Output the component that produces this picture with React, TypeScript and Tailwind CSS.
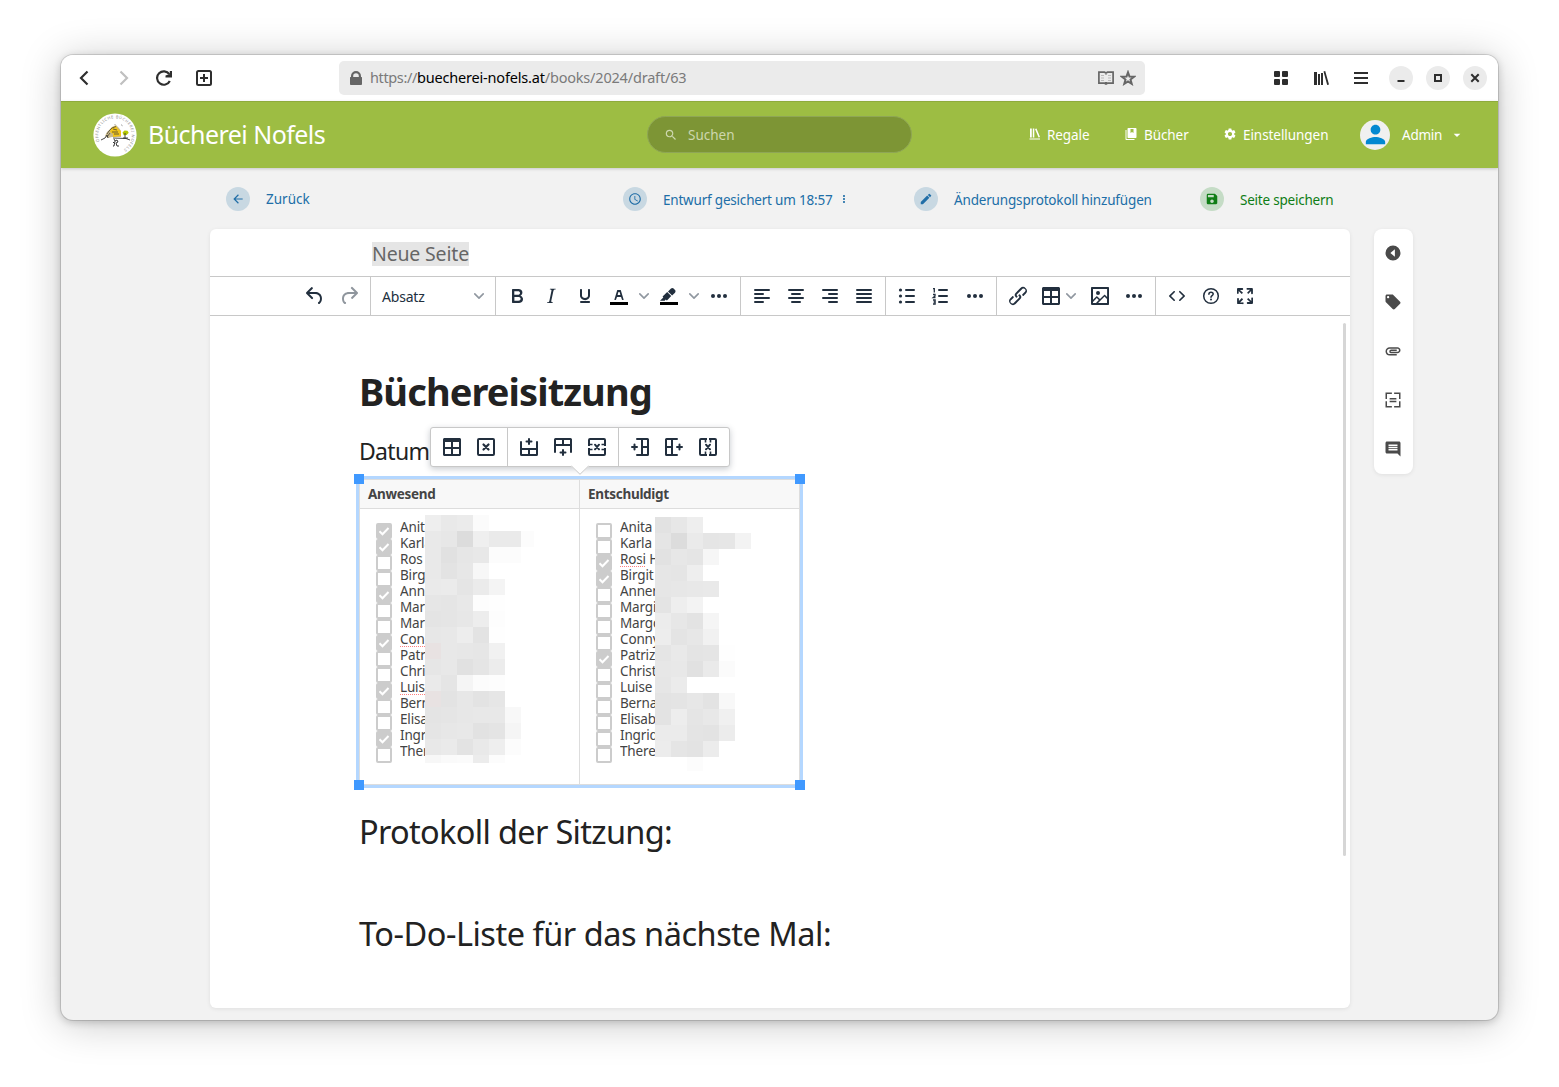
import React from "react";
import {
  MdArrowBack, MdAccessTime, MdEdit, MdSave, MdSearch, MdSettings, MdPerson,
  MdArrowDropDown, MdMoreVert, MdLocalOffer, MdAttachment, MdComment,
} from "react-icons/md";

function T({ c = "", children }: { c?: string; children: React.ReactNode }) {
  return <span className={"whitespace-pre " + c}>{children}</span>;
}

function Tm({ children, c = "h-6 w-6" }: { children: React.ReactNode; c?: string }) {
  return <svg viewBox="0 0 24 24" className={"shrink-0 fill-[#222f3e] " + c}>{children}</svg>;
}
function Btn({ children, c = "w-[34px]" }: { children: React.ReactNode; c?: string }) {
  return <div className={"flex shrink-0 items-center justify-center " + c}>{children}</div>;
}
function Chev() {
  return (
    <Btn c="w-4">
      <svg viewBox="0 0 10 10" className="h-[10px] w-[10px] fill-none stroke-[#9097a0]" strokeWidth="1.6" strokeLinecap="round" strokeLinejoin="round"><path d="M.8 2.9 5 7.1 9.2 2.9" /></svg>
    </Btn>
  );
}
const P = {
  undo: "M6.4 8H12c3.7 0 6.2 2 6.8 5.1.6 2.7-.4 5.6-2.3 6.8a1 1 0 0 1-1-1.8c1.1-.6 1.8-2.7 1.4-4.6-.5-2.1-2.1-3.5-4.9-3.5H6.4l3.3 3.3a1 1 0 1 1-1.4 1.4l-5-5a1 1 0 0 1 0-1.4l5-5a1 1 0 0 1 1.4 1.4L6.4 8Z",
  redo: "M17.6 10H12c-2.8 0-4.4 1.4-4.9 3.5-.4 2 .3 4 1.4 4.6a1 1 0 1 1-1 1.8c-2-1.2-2.9-4.1-2.3-6.8.6-3 3-5.1 6.8-5.1h5.6l-3.3-3.3a1 1 0 1 1 1.4-1.4l5 5a1 1 0 0 1 0 1.4l-5 5a1 1 0 0 1-1.4-1.4l3.3-3.3Z",
  bold: "M7.8 19c-.3 0-.5 0-.6-.2l-.2-.5V5.7c0-.2 0-.4.2-.5l.6-.2h5c1.5 0 2.7.3 3.5 1 .7.6 1.1 1.4 1.1 2.5a3 3 0 0 1-.6 1.9c-.4.6-1 1-1.6 1.2.4.1.9.3 1.3.6s.8.7 1 1.2c.4.4.5 1 .5 1.6 0 1.3-.4 2.3-1.3 3-.8.7-2.1 1-3.8 1H7.8Zm5-8.3c.6 0 1.2-.1 1.6-.5.4-.3.6-.7.6-1.3 0-1.1-.8-1.7-2.3-1.7H9.3v3.5h3.4Zm.5 6c.7 0 1.3-.1 1.7-.4.4-.4.6-.9.6-1.5s-.2-1-.7-1.4c-.4-.3-1-.4-2-.4H9.4v3.8h4Z",
  italic: "m16.7 4.7-.1.9h-.3c-.6 0-1 0-1.4.3-.3.3-.4.6-.5 1.1l-2.1 9.8v.6c0 .5.4.8 1.4.8h.2l-.2.8H8l.2-.8h.2c1.1 0 1.8-.5 2-1.5l2-9.8.1-.5c0-.6-.4-.8-1.4-.8h-.3l.2-.9h5.8Z",
  underline: "M16 5c.6 0 1 .4 1 1v5.5a4 4 0 0 1-.4 1.8l-1 1.4a5.3 5.3 0 0 1-5.5 1 5 5 0 0 1-1.6-1c-.5-.4-.8-.9-1.1-1.4a4 4 0 0 1-.4-1.8V6c0-.6.4-1 1-1s1 .4 1 1v5.5c0 .3 0 .6.2 1l.6.7a3.3 3.3 0 0 0 2.2.8 3.4 3.4 0 0 0 2.2-.8c.3-.2.4-.5.6-.8l.2-.9V6c0-.6.4-1 1-1ZM8 17h8c.6 0 1 .4 1 1s-.4 1-1 1H8a1 1 0 0 1 0-2Z",
  color: "M8.7 16h-.8a.5.5 0 0 1-.5-.6l2.7-9c.1-.3.3-.4.5-.4h2.8c.2 0 .4.1.5.4l2.7 9a.5.5 0 0 1-.5.6h-.8a.5.5 0 0 1-.4-.4l-.7-2.2c0-.3-.3-.4-.5-.4h-3.4c-.2 0-.4.1-.5.4l-.7 2.2c0 .3-.2.4-.4.4Zm2.6-7.6-.6 2a.5.5 0 0 0 .5.6h1.6a.5.5 0 0 0 .5-.6l-.6-2c0-.3-.3-.4-.5-.4h-.4c-.2 0-.4.1-.5.4Z",
  mark: "M7.7 16.7H3l3.3-3.3-.7-.8L10.2 8l4 4.1-4 4.2c-.2.2-.6.2-.8 0l-.6-.7-1.1 1.1zm5-7.5L11 7.4l3-2.9a2 2 0 0 1 2.6 0L18 6c.7.7.7 2 0 2.7l-2.9 2.9-1.8-1.8-.5-.6",
  link: "M6.2 12.3a1 1 0 0 1 1.4 1.4l-2 2a2 2 0 1 0 2.6 2.8l4.8-4.8a1 1 0 0 0 0-1.4 1 1 0 1 1 1.4-1.3 2.9 2.9 0 0 1 0 4L9.6 20a3.9 3.9 0 0 1-5.5-5.5l2-2Zm11.6-.6a1 1 0 0 1-1.4-1.4l2-2a2 2 0 1 0-2.6-2.8L11 10.3a1 1 0 0 0 0 1.4A1 1 0 1 1 9.6 13a2.9 2.9 0 0 1 0-4L14.4 4a3.9 3.9 0 0 1 5.5 5.5l-2 2Z",
  image: "m5 15.7 3.3-3.2c.3-.3.7-.3 1 0L12 15l4.1-4c.3-.4.8-.4 1 0l2 1.9V5H5v10.7ZM5 18V19h3l2.8-2.9-2-2L5 17.9Zm14-3-2.5-2.4-6.4 6.5H19v-4ZM4 3h16c.6 0 1 .4 1 1v16c0 .6-.4 1-1 1H4a1 1 0 0 1-1-1V4c0-.6.4-1 1-1Zm6 8a2 2 0 1 0 0-4 2 2 0 0 0 0 4Z",
  code: "M9.8 15.7c.3.3.3.8 0 1-.3.4-.9.4-1.2 0l-4.4-4.1a.8.8 0 0 1 0-1.2l4.4-4.2c.3-.3.9-.3 1.2 0 .3.3.3.8 0 1.1L6 12l3.8 3.7ZM14.2 15.7c-.3.3-.3.8 0 1 .4.4.9.4 1.2 0l4.4-4.1c.3-.3.3-.9 0-1.2l-4.4-4.2a.8.8 0 0 0-1.2 0c-.3.3-.3.8 0 1.1L18 12l-3.8 3.7Z",
  full: "m15.3 10-1.2-1.3 2.9-3h-2.3a.9.9 0 1 1 0-1.7H19c.5 0 .9.4.9.9v4.4a.9.9 0 1 1-1.8 0V7l-2.9 3Zm0 4 3 3v-2.3a.9.9 0 1 1 1.7 0V19c0 .5-.4.9-.9.9h-4.4a.9.9 0 1 1 0-1.8H17l-3-2.9 1.3-1.2ZM10 15.4l-2.9 3h2.3a.9.9 0 1 1 0 1.7H5a.9.9 0 0 1-.9-.9v-4.4a.9.9 0 1 1 1.8 0V17l2.9-3 1.2 1.3ZM8.7 10 5.7 7v2.3a.9.9 0 0 1-1.7 0V5c0-.5.4-.9.9-.9h4.4a.9.9 0 0 1 0 1.8H7l3 2.9-1.3 1.2Z",
  table: "M4.5 3h15c.8 0 1.5.7 1.5 1.5v15c0 .8-.7 1.5-1.5 1.5h-15c-.8 0-1.5-.7-1.5-1.5v-15C3 3.700 3.700 3 4.500 3ZM5 14v5h6v-5H5Zm14 0h-6v5h6v-5Zm0-7h-6v5h6V7ZM5 12h6V7H5v5Z",
};

function Align({ rows }: { rows: [number, number][] }) {
  return <Tm>{rows.map(([x, w], i) => <rect key={i} x={x} y={5 + 4 * i} width={w} height="2" rx="1" />)}</Tm>;
}
function Dots() {
  return <Tm><circle cx="6" cy="12" r="2" /><circle cx="12" cy="12" r="2" /><circle cx="18" cy="12" r="2" /></Tm>;
}
function Group({ children, last }: { children: React.ReactNode; last?: boolean }) {
  return <div className={"flex h-full shrink-0 px-1 " + (last ? "" : "border-r border-[#c8c8c8]")}>{children}</div>;
}

function Toolbar() {
  return (
    <div className="flex h-[40px] border-y border-[#c8c8c8] pl-[84px]">
      <Group>
        <Btn><Tm><path d={P.undo} /></Tm></Btn>
        <Btn><Tm c="h-6 w-6 opacity-50"><path d={P.redo} /></Tm></Btn>
      </Group>
      <div className="flex w-[125px] items-center justify-between border-r border-[#c8c8c8] pl-[11px] pr-2">
        <T c="text-[14px] tracking-[-0.2px] text-[#222f3e]">Absatz</T><Chev />
      </div>
      <Group>
        <Btn><Tm><path d={P.bold} /></Tm></Btn>
        <Btn><Tm><path d={P.italic} /></Tm></Btn>
        <Btn><Tm><path d={P.underline} /></Tm></Btn>
        <Btn><Tm><path d={P.color} /><path fill="#000" d="M3 18h18v3H3z" /></Tm></Btn>
        <Chev />
        <Btn><Tm><path d={P.mark} /><path fill="#000" d="M3 18h18v3H3z" /></Tm></Btn>
        <Chev />
        <Btn><Dots /></Btn>
      </Group>
      <Group>
        <Btn><Align rows={[[4, 16], [4, 10], [4, 16], [4, 10]]} /></Btn>
        <Btn><Align rows={[[4, 16], [7, 10], [4, 16], [7, 10]]} /></Btn>
        <Btn><Align rows={[[4, 16], [10, 10], [4, 16], [10, 10]]} /></Btn>
        <Btn><Align rows={[[4, 16], [4, 16], [4, 16], [4, 16]]} /></Btn>
      </Group>
      <Group>
        <Btn><Tm><circle cx="5.500" cy="6" r="1.600" /><circle cx="5.500" cy="12" r="1.600" /><circle cx="5.500" cy="18" r="1.600" /><rect x="10" y="5" width="10" height="2" rx="1" /><rect x="10" y="11" width="10" height="2" rx="1" /><rect x="10" y="17" width="10" height="2" rx="1" /></Tm></Btn>
        <Btn><Tm><rect x="9" y="5" width="10" height="2" rx="1" /><rect x="9" y="11" width="10" height="2" rx="1" /><rect x="9" y="17" width="10" height="2" rx="1" /><path className="fill-none stroke-[#222f3e]" strokeWidth="1.300" d="M4 4.600h1.300V8.500M4 10.500h2v1.400l-1.800 1.600h2.300M4 16h2.100v4H4M4.600 18H6" /></Tm></Btn>
        <Btn><Dots /></Btn>
      </Group>
      <Group>
        <Btn><Tm><path d={P.link} /></Tm></Btn>
        <Btn c="w-[48px] pl-1 pr-1"><Tm><path d={P.table} /></Tm><Chev /></Btn>
        <Btn><Tm><path d={P.image} /></Tm></Btn>
        <Btn><Dots /></Btn>
      </Group>
      <Group last>
        <Btn><Tm><path d={P.code} /></Tm></Btn>
        <Btn><Tm><g className="fill-none stroke-[#222f3e]" strokeWidth="1.500"><circle cx="12" cy="12" r="7.300" /><path strokeLinecap="round" d="M9.900 10.200c0-1.300.9-2 2.100-2s2.200.7 2.200 1.900c0 1.500-2.200 1.600-2.200 3.200" /></g><circle cx="12" cy="15.600" r="1" /></Tm></Btn>
        <Btn><Tm><path d={P.full} /></Tm></Btn>
      </Group>
    </div>
  );
}

const line = "fill-none stroke-[#222f3e]";
function Popup() {
  return (
    <div className="absolute left-[220px] top-[198px] flex h-[40px] w-[300px] rounded-[3px] border border-[#c8c8c8] bg-white shadow-[0_2px_6px_rgba(34,47,62,0.25)]">
      <Group>
        <Btn><Tm><path d={P.table} /></Tm></Btn>
        <Btn><Tm><g className={line} strokeWidth="2"><rect x="4" y="4" width="16" height="16" rx="1" /><path strokeWidth="2.200" strokeLinecap="round" d="m9.500 9.500 5 5m0-5-5 5" /></g></Tm></Btn>
      </Group>
      <Group>
        <Btn><Tm><g className={line} strokeWidth="2" strokeLinecap="round"><path d="M4 7v12.500c0 .3.200.5.500.500h15c.3 0 .5-.2.500-.5V7M4 14h16M12 14v6M12 4v5M9.500 6.500h5" /></g></Tm></Btn>
        <Btn><Tm><g className={line} strokeWidth="2" strokeLinecap="round"><path d="M4 17V4.500c0-.3.200-.5.500-.5h15c.3 0 .5.200.5.500V17M4 10h16M12 10V4M12 20v-5M9.500 17.500h5" /></g></Tm></Btn>
        <Btn><Tm><g className={line} strokeWidth="2"><rect x="4" y="4" width="16" height="16" rx="1" /><path strokeWidth="1.600" d="M5 9.500h2.500M16.500 9.500H19M5 14.500h2.500M16.500 14.500H19" /><path strokeLinecap="round" d="m10 9.700 4 4.600m0-4.600-4 4.600" /></g><path fill="#fff" d="M3 11h2v2H3zM19 11h2v2h-2z" /></Tm></Btn>
      </Group>
      <Group last>
        <Btn><Tm><g className={line} strokeWidth="2" strokeLinecap="round"><path d="M9 4h10.500c.3 0 .5.200.5.500v15c0 .3-.2.500-.5.500H9M14 4v16M14 12h6M4 12h5M6.500 9.500v5" /></g></Tm></Btn>
        <Btn><Tm><g className={line} strokeWidth="2" strokeLinecap="round"><path d="M15 4H4.500c-.3 0-.5.200-.5.500v15c0 .3.200.5.500.5H15M10 4v16M10 12H4M20 12h-5M17.500 9.500v5" /></g></Tm></Btn>
        <Btn><Tm><g className={line} strokeWidth="2"><rect x="4" y="4" width="16" height="16" rx="1" /><path strokeWidth="1.600" d="M9.500 5v2.500M14.500 5v2.500M9.500 16.500V19M14.500 16.500V19" /><path strokeLinecap="round" d="m10 9.700 4 4.600m0-4.600-4 4.600" /></g><path fill="#fff" d="M11 3h2v2h-2zM11 19h2v2h-2z" /></Tm></Btn>
      </Group>
      <svg viewBox="0 0 18 10" className="absolute left-[140px] top-[37px] h-[10px] w-[18px]"><path d="M0 1 9 9.500 18 1V0H0Z" fill="#fff" /><path d="M.5 1 9 9.300 17.500 1" fill="none" stroke="#c8c8c8" /></svg>
    </div>
  );
}

const gridLeft = [
  "eee9ebfb", "e9e7dcefeaeafc", "e9e1e6e8fcfc", "e9e3e7f7", "eaebe5ebf4", "e6e5e8fdfe", "e4e5e7edfd", "e7e8ede3fe",
  "e5e8e7e6f1", "e6e8e1e5ec", "eae5f5fcfd", "e8e3e7e3e6", "e4e5e7e8e8f8", "e5e7e8e2e4f5", "e8eae3e9eefc", "f7fafbecfcff",
];
const gridRight = [
  "e2e7ee", "e5dceae5e6f3", "e2e7e5f6", "e6e5ee", "e6e7e8e9", "e4eef3", "ece7e3f5", "ede4e7f1",
  "e5e9e4e5fe", "e7e8e1eafb", "e6eb", "e3e4e7e3f8", "e3ede5e8f0", "ebebe4e3ec", "ece5e3ec", "fffffc",
];
function Mosaic({ rows, c, pink = [] }: { rows: string[]; c: string; pink?: number[] }) {
  return (
    <div className={"absolute flex flex-col overflow-hidden " + c}>
      {rows.map((r, i) => (
        <div key={i} className="flex h-4 shrink-0">
          {(r.match(/../g) || []).map((v, j) => (
            <div key={j} className="h-4 w-4 shrink-0" style={{ backgroundColor: v === "ff" ? "transparent" : j === 0 && pink.includes(i) ? "#e8e2e2" : `#${v}${v}${v}` }} />
          ))}
        </div>
      ))}
    </div>
  );
}

function List({ names, checked, clip, wavy }: { names: string[]; checked: number[]; clip: string; wavy: number[] }) {
  return (
    <div className="flex flex-col pl-4 pt-[14px]">
      {names.map((n, i) => (
        <div key={i} className="flex h-4">
          <div className={"flex h-4 w-4 shrink-0 items-center justify-center rounded-[2px] border-2 border-[#cccccc] " + (checked.includes(i) ? "bg-[#cccccc]" : "bg-white")}>
            {checked.includes(i) && <svg viewBox="0 0 12 12" className="h-3 w-3 shrink-0 fill-none stroke-white" strokeWidth="2"><path d="m1.500 6.300 3 3L10.500 3" /></svg>}
          </div>
          <div className={"-mt-[6px] ml-2 h-[20px] overflow-hidden whitespace-pre text-[13.500px] leading-[20px] tracking-[-0.15px] text-[#444] " + clip}>
            {wavy.includes(i)
              ? <><T c="underline decoration-[#ff8080] decoration-dotted decoration-[1px] underline-offset-[2px] [text-decoration-skip-ink:none]">{n.split(" ")[0]}</T>{n.includes(" ") ? " " + n.split(" ")[1] : ""}</>
              : n}
          </div>
        </div>
      ))}
    </div>
  );
}

const left = ["Anita", "Karla", "Ros", "Birgit", "Anne", "Marg", "Marg", "Conny", "Patriz", "Christ", "Luise", "Berna", "Elisab", "Ingrid", "There"];
const right = ["Anita", "Karla", "Rosi H", "Birgit", "Annem", "Margit", "Margo", "Conny", "Patrizi", "Christa", "Luise", "Bernad", "Elisabe", "Ingrid", "Theres"];

function Handle({ c }: { c: string }) {
  return <div className={"absolute h-[10px] w-[10px] bg-[#4099ff] " + c} />;
}

function TableBlock() {
  return (
    <div className="relative ml-[149px] h-[306px] w-[441px] border border-[#dddddd] bg-white outline-[3px] outline-[#b4d7ff] outline-solid">
      <div className="grid h-[29px] grid-cols-[220px_219px] border-b border-[#dddddd] bg-[#f8f8f8] text-[13.500px] font-bold leading-[28px] tracking-[-0.3px] text-[#444]">
        <div className="border-r border-[#dddddd] pl-2"><T>Anwesend</T></div>
        <div className="pl-2"><T>Entschuldigt</T></div>
      </div>
      <div className="grid h-[275px] grid-cols-[220px_219px]">
        <div className="border-r border-[#dddddd]"><List names={left} checked={[0, 1, 4, 7, 10, 13]} clip="w-[26px]" wavy={[7, 10]} /></div>
        <List names={right} checked={[2, 3, 8]} clip="w-[36px]" wavy={[2]} />
      </div>
      <Mosaic rows={gridLeft} c="left-[65px] top-[35px] h-[248px] w-[109px]" pink={[8, 11]} />
      <Mosaic rows={gridRight} c="left-[295px] top-[37px] h-[254px]" />
      <Handle c="-left-[6px] -top-[6px]" /><Handle c="-right-[6px] -top-[6px]" />
      <Handle c="-bottom-[6px] -left-[6px]" /><Handle c="-bottom-[6px] -right-[6px]" />
    </div>
  );
}

function Logo() {
  return (
    <svg viewBox="0 0 44 44" className="h-[44px] w-[44px]">
      <circle cx="22" cy="22" r="21.600" fill="#fff" />
      <defs><path id="ring" d="M6.500 28.500A16.800 16.800 0 1 1 24 38.700" /></defs>
      <text fontSize="3.900" fill="#888" fontFamily="Noto Sans"><textPath href="#ring" startOffset="0" textLength="76">ÖFFENTLICHE BÜCHEREI NOFELS</textPath></text>
      <path d="M14 19l5-5 4-2 3 3 2 3v6h-9l-4 1-3-2Z" fill="#c9b98a" />
      <path d="M18 15l5-2 2 3 3 2v5l-8 1v-3l-3-2Z" fill="#f0c419" />
      <path d="M14 21l2-3 3-3 4-1.500M19 19h6M21 21h5M14 24l3-4M20 16l4 1" stroke="#4a4434" fill="none" strokeWidth=".8" />
      <path d="M29.500 19.500l2-2 3 .3 1.200 2-2 2.200-3 .2Z" fill="#b5c800" />
      <path d="M32 20v5M30 25h5M8 27l4-2 2-3 1 3M20 25l13 .5 4 1.500M22 11.500l.5.500M28.500 12l.8.600" stroke="#333" fill="none" strokeWidth=".9" />
      <path d="M21 26l1 2-1 5h-1M22 28l2-1 1 2-2 1 1 3h2M20 29l1 1" stroke="#222" fill="none" strokeWidth=".9" />
    </svg>
  );
}

const ic = "fill-none stroke-[#2e2e2e]";
function BrowserBar() {
  return (
    <div className="flex h-[46px] shrink-0 items-center bg-white">
      <div className="flex w-[278px] items-center gap-6 pl-[15px]">
        <svg viewBox="0 0 16 16" className={"h-4 w-4 " + ic} strokeWidth="2.200"><path d="M11.500 1.500 5 8l6.500 6.500" /></svg>
        <svg viewBox="0 0 16 16" className="h-4 w-4 fill-none stroke-[#c0c0c0]" strokeWidth="2.200"><path d="M4.500 1.500 11 8l-6.500 6.500" /></svg>
        <svg viewBox="0 0 16 16" className={"h-4 w-4 " + ic} strokeWidth="2.200"><path d="M13.800 11A6.700 6.700 0 1 1 13.300 4.200" /><path className="fill-[#2e2e2e] stroke-none" d="M16 1v6.500H9.500V5.500L13.800 4V1Z" /></svg>
        <svg viewBox="0 0 16 16" className={"h-4 w-4 " + ic} strokeWidth="2"><rect x="1" y="1" width="14" height="14" rx="1.500" /><path d="M8 4v8M4 8h8" /></svg>
      </div>
      <div className="flex h-[34px] w-[806px] items-center rounded-[5px] bg-[#ebebeb] pl-[9px] pr-[9px] text-[14.500px] text-[#7a7a7a]">
        <svg viewBox="0 0 16 16" className="mr-[6px] h-4 w-4 fill-[#666]"><path fillRule="evenodd" d="M3 7V6a5 5 0 0 1 10 0v1h.5c.3 0 .5.200.5.500V14c0 .5-.4 1-1 1H3c-.6 0-1-.5-1-1V7.500c0-.3.200-.5.500-.5Zm2.200 0h5.600V6a2.800 2.800 0 0 0-5.600 0Z" /></svg>
        <T c="tracking-[-0.37px]">https://</T><T c="tracking-[-0.19px] text-black">buecherei-nofels.at</T><T c="tracking-[-0.19px]">/books/2024/draft/63</T>
        <svg viewBox="0 0 16 16" className="ml-auto h-4 w-4 fill-none stroke-[#666]" strokeWidth="1.700"><path d="M.9 2.200h5.600L8 3l1.500-.8h5.600v11H9.500L8 14l-1.500-.8H.9ZM8 3v1.500M8 12v2" /><path stroke="#bbb" d="M3 5.500h3M10 5.500h3M3 8h3M10 8h3M3 10.500h3M10 10.500h3" strokeWidth="1.100" /></svg>
        <svg viewBox="0 0 16 16" className="ml-[6px] h-4 w-4 fill-none stroke-[#666]" strokeWidth="2"><path d="m8 2.300 1.500 4.200 4.500.200-3.500 2.800 1.200 4.300L8 11.400l-3.700 2.400 1.200-4.300L2 6.700l4.500-.2Z" /></svg>
      </div>
      <div className="ml-[128px] flex items-center gap-6 text-[#2e2e2e]">
        <svg viewBox="0 0 16 16" className="h-4 w-4 fill-[#2e2e2e]"><rect x="1" y="1" width="6" height="6" rx="1" /><rect x="9" y="1" width="6" height="6" rx="1" /><rect x="1" y="9" width="6" height="6" rx="1" /><rect x="9" y="9" width="6" height="6" rx="1" /></svg>
        <svg viewBox="0 0 16 16" className="h-4 w-4 fill-[#2e2e2e]"><path d="M1 2h3v13H1zM5 4h2v11H5zM8 3h2v12H8zM10.500 1.500l1.700-.4L16 14.500l-1.800.5z" /></svg>
        <svg viewBox="0 0 16 16" className="h-4 w-4 fill-[#2e2e2e]"><path d="M1 2h14v2H1zM1 7h14v2H1zM1 12h14v2H1z" /></svg>
      </div>
      <div className="ml-5 flex gap-[13px]">
        {["M4.500 10h7v2h-7z", "M4 4v8h8V4ZM6 6h4v4H6Z", ""].map((d, i) => (
          <div key={i} className="flex h-6 w-6 items-center justify-center rounded-full bg-[#ebebeb]">
            <svg viewBox="0 0 16 16" className="h-4 w-4 fill-[#2e2e2e]" fillRule="evenodd">{d ? <path d={d} /> : <path className={ic} strokeWidth="2" d="m4.300 4.300 7.400 7.400m0-7.400-7.400 7.400" />}</svg>
          </div>
        ))}
      </div>
    </div>
  );
}

function Header() {
  return (
    <div className="z-10 flex h-[67px] shrink-0 items-center border-t border-[#8eab3c] bg-[#9dbd43] pb-px text-[13.500px] text-white shadow-[0_1px_3px_rgba(0,0,0,0.18)]">
      <div className="flex w-[586px] items-center pl-[32px]">
        <Logo />
        <T c="ml-[11px] text-[25px] leading-none tracking-[-0.55px]">Bücherei Nofels</T>
      </div>
      <div className="flex h-[37px] w-[265px] items-center rounded-full border border-[#8fa656] bg-[#7d9535] pl-4 text-[#cdd7ae]">
        <MdSearch className="mr-[10px] h-[14px] w-[14px]" />
        <T c="pt-[2px]">Suchen</T>
      </div>
      <div className="ml-[116px] flex w-[97px] items-center justify-start">
        <svg viewBox="0 0 12 12" className="-mt-px ml-px mr-[6px] h-3 w-3 fill-white"><path d="M1 .5h1.800v9H1zM3.800.5h1.500v9H3.800zM6 1l1.500-.4L11 9l-1.400.5zM.5 10.500H11v1H.5z" /></svg>
        <T c="pt-[2px] tracking-[-0.08px]">Regale</T>
      </div>
      <div className="flex w-[98px] items-center">
        <svg viewBox="0 0 12 12" className="-mt-px mr-[7px] h-3 w-3 fill-white" fillRule="evenodd"><path d="M3.500 0h7c.6 0 1 .4 1 1v8c0 .6-.4 1-1 1h-7c-.6 0-1-.4-1-1V1c0-.6.400-1 1-1ZM5.500 1v4L7 4l1.500 1V1Z" /><path d="M.500 2h1v9h8v1H1.500c-.6 0-1-.4-1-1Z" /></svg>
        <T c="pt-[2px] tracking-[-0.08px]">Bücher</T>
      </div>
      <div className="flex w-[137px] items-center"><MdSettings className="-mt-px mr-[6px] h-[14px] w-[14px]" /><T c="pt-[2px] tracking-[-0.06px]">Einstellungen</T></div>
      <div className="flex items-center">
        <div className="mr-3 flex h-[30px] w-[30px] items-center justify-center rounded-full bg-[#f0f0f0]"><MdPerson className="h-[29px] w-[29px] text-[#0288d1]" /></div>
        <T c="pt-[2px] tracking-[-0.25px]">Admin</T>
        <MdArrowDropDown className="ml-[7px] mt-px h-4 w-4" />
      </div>
    </div>
  );
}

function Action({ icon, children, c, bg }: { icon: React.ReactNode; children: React.ReactNode; c: string; bg: string }) {
  return (
    <div className={"flex items-center text-[13.500px] " + c}>
      <div className={"mr-4 flex h-6 w-6 items-center justify-center rounded-full " + bg}>{icon}</div>
      {children}
    </div>
  );
}

export default function App() {
  const blue = "text-[#206ea7]";
  return (
    <div className="h-[1087px] w-[1559px] overflow-hidden bg-white pl-[61px] pt-[55px] font-['Noto_Sans',sans-serif]">
      <div className="flex h-[965px] w-[1437px] flex-col overflow-hidden rounded-[12px] bg-[#f2f2f2] shadow-[0_0_0_1px_rgba(0,0,0,0.12),0_2px_8px_rgba(0,0,0,0.2),0_4px_40px_rgba(0,0,0,0.22)]">
        <BrowserBar />
        <Header />
        <div className="flex h-[61px] shrink-0 items-center pl-[165px]">
          <div className="w-[397px]"><Action c={blue} bg="bg-[#c8d8e2]" icon={<MdArrowBack className="h-[14px] w-[14px]" />}><T c="pt-[2px]">Zurück</T></Action></div>
          <div className="w-[291px]"><Action c={blue} bg="bg-[#c8d8e2]" icon={<MdAccessTime className="h-[14px] w-[14px]" />}><T c="pt-1 tracking-[-0.2px]">Entwurf gesichert um 18:57</T><MdMoreVert className="ml-[6px] h-3 w-3" /></Action></div>
          <div className="w-[286px]"><Action c={blue} bg="bg-[#c8d8e2]" icon={<MdEdit className="h-[14px] w-[14px]" />}><T c="pt-1 tracking-[-0.17px]">Änderungsprotokoll hinzufügen</T></Action></div>
          <Action c="text-[#0f7d15]" bg="bg-[#c5dcc6]" icon={<MdSave className="h-[14px] w-[14px]" />}><T c="pt-1 tracking-[-0.22px]">Seite speichern</T></Action>
        </div>
        <div className="flex pl-[149px]">
          <div className="relative flex h-[779px] w-[1140px] flex-col rounded-[6px] bg-white shadow-[0_1px_4px_rgba(0,0,0,0.08)]">
            <div className="flex h-[47px] items-center pl-[162px] pt-[2px]"><T c="bg-[#e5e5e5] text-[19.500px] leading-[24px] tracking-[-0.17px] text-[#666]">Neue Seite</T></div>
            <Toolbar />
            <div className="flex flex-col text-[#222]">
              <div className="ml-[149px] mt-[45px] text-[38px] font-bold leading-[60px] tracking-[-0.9px]"><T>Büchereisitzung</T></div>
              <div className="ml-[149px] mt-[14px] h-[44px] text-[23px] leading-[32px] tracking-[-0.7px]"><T>Datum</T></div>
              <TableBlock />
              <div className="ml-[149px] mt-[22px] text-[32.500px] leading-[50px] tracking-[-0.68px]"><T>Protokoll der Sitzung:</T></div>
              <div className="ml-[149px] mt-[52px] text-[32.500px] leading-[50px] tracking-[-0.48px]"><T>To-Do-Liste für das nächste Mal:</T></div>
            </div>
            <Popup />
            <div className="absolute right-1 top-[94px] h-[533px] w-[3px] rounded-full bg-[#d6d6d6]" />
          </div>
          <div className="ml-6 flex h-[245px] w-[39px] flex-col items-center justify-around rounded-[8px] bg-white pb-px pr-px text-[#4a4a4a] shadow-[0_1px_4px_rgba(0,0,0,0.08)]">
            <svg viewBox="0 0 24 24" className="h-[18px] w-[18px] fill-current" fillRule="evenodd"><path d="M12 2a10 10 0 1 0 0 20 10 10 0 0 0 0-20Zm2.500 5v10l-6-5Z" /></svg>
            <MdLocalOffer className="h-[18px] w-[18px]" />
            <MdAttachment className="h-[18px] w-[18px]" />
            <svg viewBox="0 0 24 24" className="h-[18px] w-[18px] fill-none stroke-current" strokeWidth="2"><path d="M10.500 3H3v7.500M13.500 3H21v7.500M10.500 21H3v-7.500M13.500 21H21v-7.500M7.500 10.200h9M7.500 14h9" /></svg>
            <MdComment className="h-[18px] w-[18px]" />
          </div>
        </div>
      </div>
    </div>
  );
}
